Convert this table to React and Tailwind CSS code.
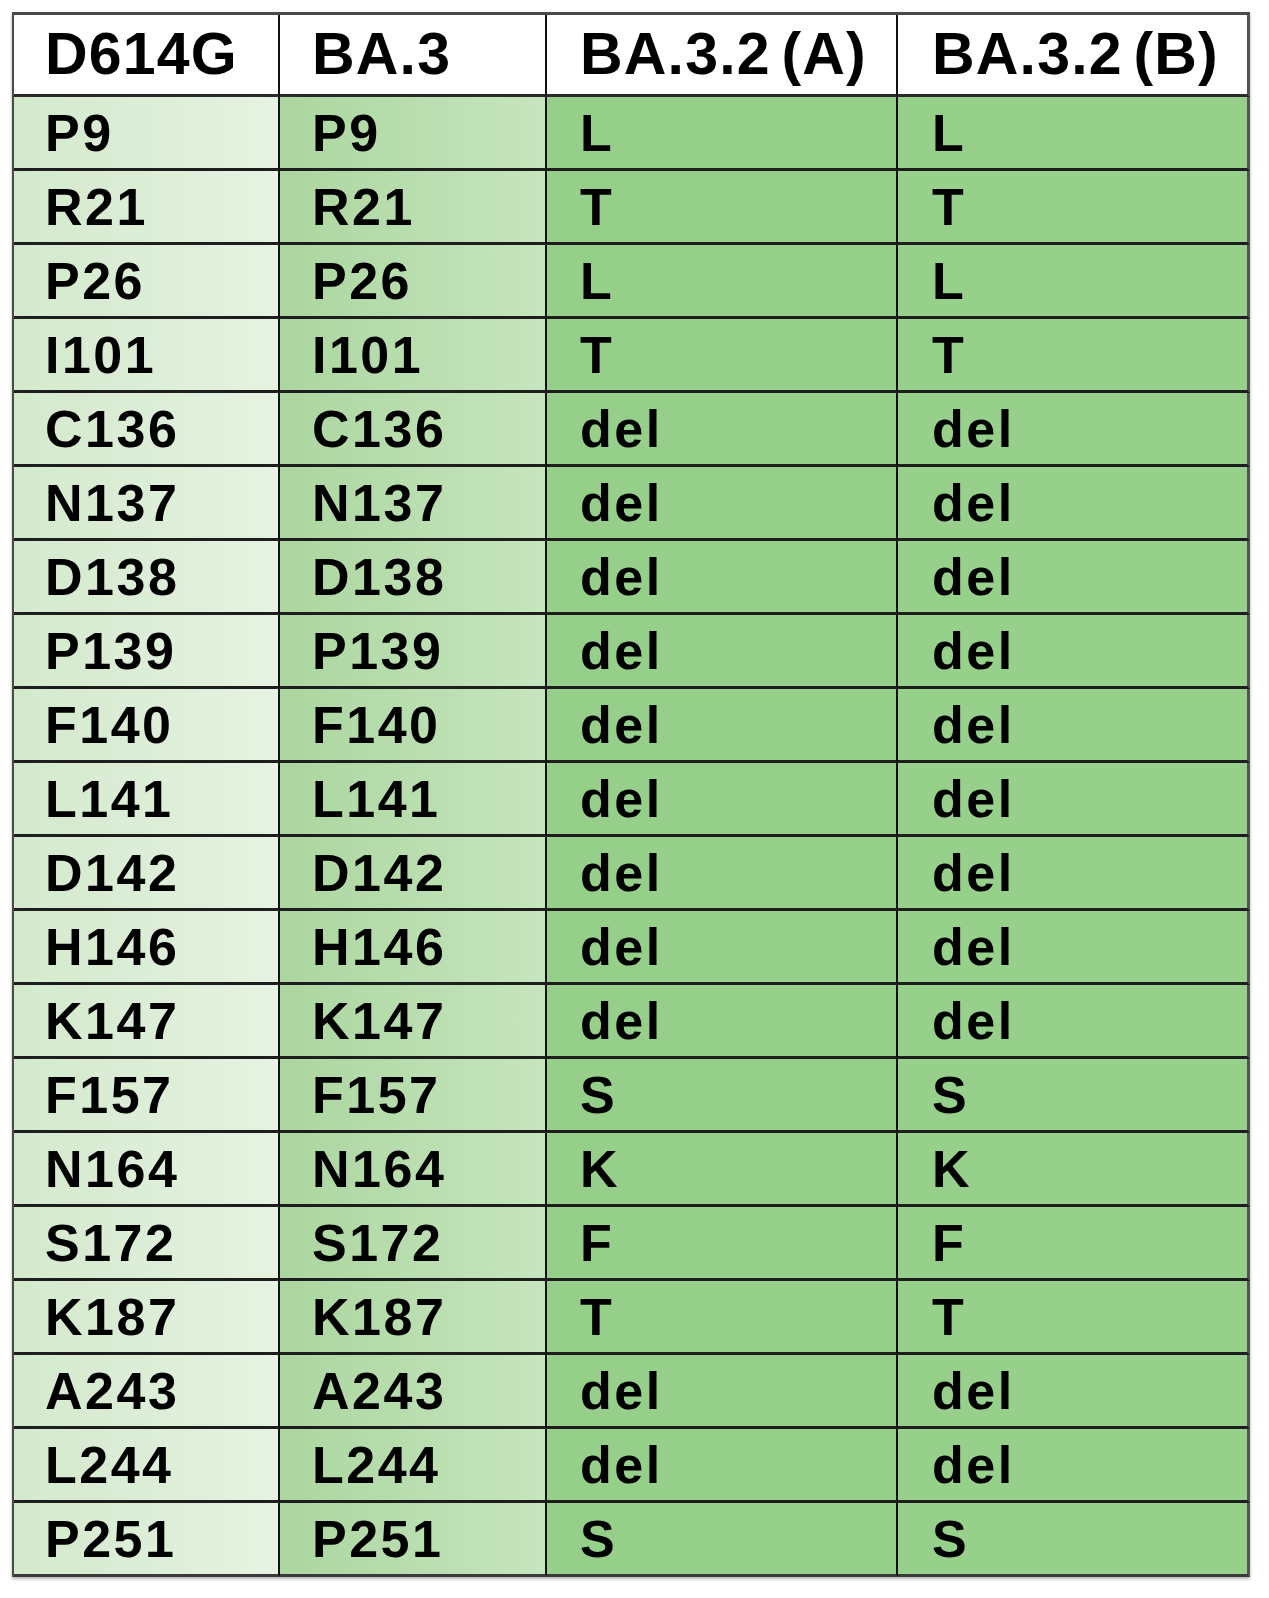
import React from 'react';

const rows = [
  ['P9', 'P9', 'L', 'L'],
  ['R21', 'R21', 'T', 'T'],
  ['P26', 'P26', 'L', 'L'],
  ['I101', 'I101', 'T', 'T'],
  ['C136', 'C136', 'del', 'del'],
  ['N137', 'N137', 'del', 'del'],
  ['D138', 'D138', 'del', 'del'],
  ['P139', 'P139', 'del', 'del'],
  ['F140', 'F140', 'del', 'del'],
  ['L141', 'L141', 'del', 'del'],
  ['D142', 'D142', 'del', 'del'],
  ['H146', 'H146', 'del', 'del'],
  ['K147', 'K147', 'del', 'del'],
  ['F157', 'F157', 'S', 'S'],
  ['N164', 'N164', 'K', 'K'],
  ['S172', 'S172', 'F', 'F'],
  ['K187', 'K187', 'T', 'T'],
  ['A243', 'A243', 'del', 'del'],
  ['L244', 'L244', 'del', 'del'],
  ['P251', 'P251', 'S', 'S'],
];

const headers = ['D614G', 'BA.3', 'BA.3.2 (A)', 'BA.3.2 (B)'];

// background per column: the two reference columns fade, the BA.3.2 ones are flat
const colBg = [
  'bg-gradient-to-r from-[#d3e9cc] to-[#e6f3e2]',
  'bg-gradient-to-r from-[#abd69f] to-[#c7e5be]',
  'bg-[#95cf8a]',
  'bg-[#96d08b]',
];

const colPad = ['pl-[31px]', 'pl-[32px]', 'pl-[33px]', 'pl-[34px]'];

export default function App() {
  return (
    <div className="min-h-[1598px] bg-white pt-[12px] pl-[12px]" style={{ fontFamily: '"Liberation Sans", Arial, sans-serif' }}>
      <div className="w-[1238px] border-l-2 border-t-[3px] border-[#4a4a4a] shadow-[0_2px_3px_rgba(0,0,0,0.3)]">
        <div className="grid grid-cols-[266px_267px_351px_352px] h-[82px]">
          {headers.map((h, i) => (
            <div
              key={h}
              className={`flex items-center bg-white border-b-[3px] border-[#2a2a2a] ${colPad[i]} ${i === 3 ? 'border-r-[3px] border-r-[#555]' : 'border-r-2 border-r-[#111]'}`}
            >
              <span className="text-[59px] font-bold leading-none text-black tracking-[1.2px] [word-spacing:-7px]">{h}</span>
            </div>
          ))}
        </div>
        {rows.map((r, ri) => (
          <div key={ri} className="grid grid-cols-[266px_267px_351px_352px] h-[74px]">
            {r.map((c, ci) => (
              <div
                key={ci}
                className={`flex items-center ${colBg[ci]} ${colPad[ci]} ${ri === rows.length - 1 ? 'border-b-[3px] border-b-[#3a3a3a]' : 'border-b-[3px] border-b-[#1e1e1e]'} ${ci === 3 ? 'border-r-[3px] border-r-[#555]' : 'border-r-2 border-r-[#111]'}`}
              >
                <span className="text-[52px] font-bold leading-none text-black tracking-[2.5px]">{c}</span>
              </div>
            ))}
          </div>
        ))}
      </div>
    </div>
  );
}
